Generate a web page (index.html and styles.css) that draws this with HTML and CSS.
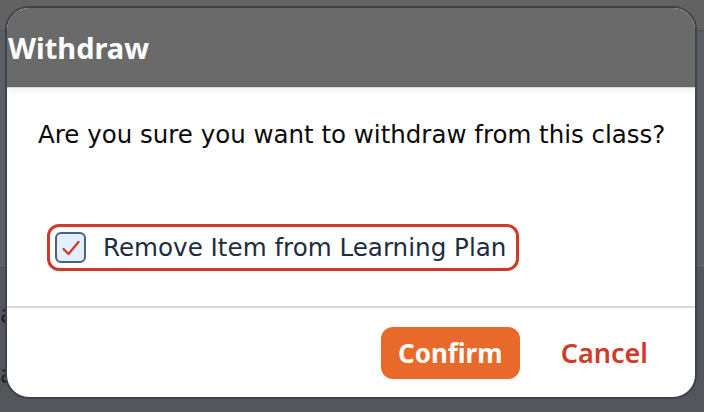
FILE: index.html
```html
<!DOCTYPE html>
<html lang="en">
<head>
<meta charset="utf-8">
<title>Withdraw</title>
<link rel="stylesheet" href="styles.css">
</head>
<body>
<div class="page">
  <div class="page-top"></div>
  <div class="page-mid"></div>
  <div class="page-low">
    <div class="page-line">a</div>
    <div class="page-line">a</div>
  </div>
</div>
<div class="dialog" role="dialog" aria-labelledby="dlg-title">
  <header class="dialog-header">
    <h1 id="dlg-title" class="dialog-title">Withdraw</h1>
  </header>
  <section class="dialog-body">
    <p class="question">Are you sure you want to withdraw from this class?</p>
    <label class="check-row">
      <span class="checkbox">
        <svg viewBox="0 0 22 22" width="22" height="22" aria-hidden="true"><path d="M3.5 12 L8.5 17 L18.5 5" fill="none" stroke="#d0392b" stroke-width="2.3" stroke-linecap="round" stroke-linejoin="round"/></svg>
      </span>
      <span class="check-text">Remove Item from Learning Plan</span>
    </label>
  </section>
  <footer class="dialog-footer">
    <button class="btn-confirm" type="button">Confirm</button>
    <button class="btn-cancel" type="button">Cancel</button>
  </footer>
</div>
</body>
</html>
```
FILE: styles.css
```css
html, body {
  margin: 0;
  padding: 0;
}
body {
  width: 704px;
  height: 412px;
  overflow: hidden;
  background: #54585c;
  position: relative;
  font-family: "DejaVu Sans", sans-serif;
}
.page {
  display: flex;
  flex-direction: column;
  height: 412px;
}
.page-top {
  height: 30px;
  background: #626262;
  border-bottom: 1px solid #4e5357;
}
.page-mid {
  height: 234px;
  background: #5b5f63;
  border-bottom: 1px solid #6a6d70;
}
.page-low {
  flex: 1;
  background: #53575b;
  padding-top: 36px;
  display: flex;
  flex-direction: column;
  gap: 34px;
}
.page-line {
  margin-left: 0;
  font-size: 24px;
  line-height: 26px;
  color: #1b1f23;
}
.dialog {
  position: absolute;
  left: 5px;
  top: 6px;
  width: 692px;
  height: 393px;
  box-sizing: border-box;
  border: 2px solid #3c434a;
  border-radius: 24px;
  background: #ffffff;
  overflow: hidden;
  display: flex;
  flex-direction: column;
}
.dialog-header {
  height: 79px;
  flex: none;
  background: #6a6a6a;
  border-bottom: 1px solid #d6d6d6;
  box-shadow: 0 3px 6px rgba(0,0,0,0.06);
  position: relative;
  z-index: 1;
  display: flex;
  align-items: center;
}
.dialog-title {
  margin: 0 0 0 1px;
  font-family: "Noto Sans", sans-serif;
  font-weight: 700;
  font-size: 29px;
  line-height: 34px;
  color: #ffffff;
  padding-top: 1px;
}
.dialog-body {
  flex: none;
  height: 220px;
  box-sizing: border-box;
  padding: 32px 0 0 31px;
  border-bottom: 2px solid #d9d9d9;
}
.question {
  margin: 0;
  font-size: 24.5px;
  line-height: 29px;
  color: #0a0a0a;
}
.check-row {
  margin-top: 75px;
  margin-left: 9px;
  display: inline-flex;
  align-items: center;
  box-sizing: border-box;
  height: 47px;
  padding: 0 10px 0 5px;
  border: 3px solid #d13a2a;
  border-radius: 12px;
  gap: 17px;
}
.checkbox {
  width: 31px;
  height: 31px;
  box-sizing: border-box;
  border: 2px solid #4c637a;
  border-radius: 6px;
  background: #e3effd;
  display: flex;
  align-items: center;
  justify-content: center;
}
.check-text {
  font-size: 24.6px;
  line-height: 28px;
  color: #1d2d3e;
}
.dialog-footer {
  flex: 1;
  display: flex;
  align-items: center;
  justify-content: flex-end;
  padding: 0 45px 0 0;
  gap: 39px;
}
.btn-confirm {
  width: 139px;
  height: 52px;
  border: none;
  border-radius: 12px;
  background: #e8692a;
  color: #ffffff;
  font-family: "Noto Sans", sans-serif;
  font-weight: 700;
  font-size: 26px;
  padding: 0;
}
.btn-cancel {
  border: none;
  background: transparent;
  color: #cf3a29;
  font-family: "Noto Sans", sans-serif;
  font-weight: 600;
  font-size: 27px;
  padding: 0 2px;
}
```
